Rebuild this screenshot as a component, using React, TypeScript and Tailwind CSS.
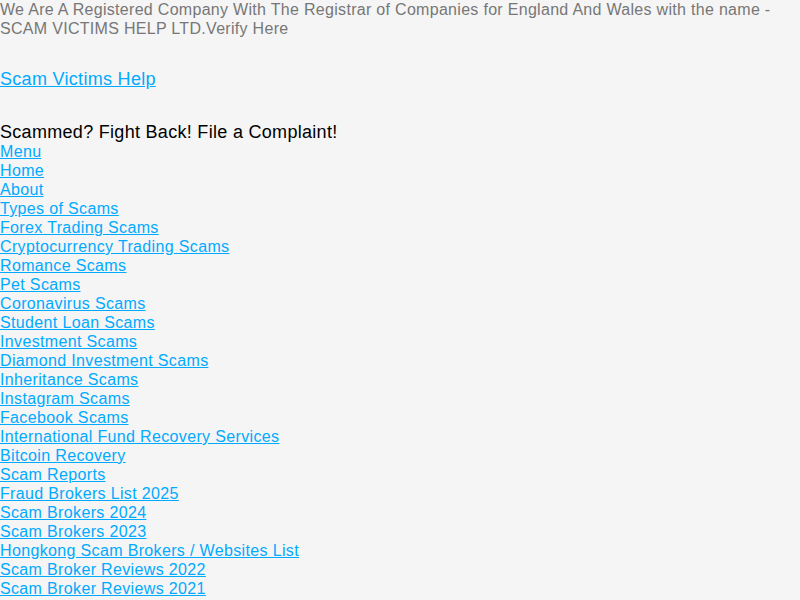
export default function App() {
  const links = [
    "Menu",
    "Home",
    "About",
    "Types of Scams",
    "Forex Trading Scams",
    "Cryptocurrency Trading Scams",
    "Romance Scams",
    "Pet Scams",
    "Coronavirus Scams",
    "Student Loan Scams",
    "Investment Scams",
    "Diamond Investment Scams",
    "Inheritance Scams",
    "Instagram Scams",
    "Facebook Scams",
    "International Fund Recovery Services",
    "Bitcoin Recovery",
    "Scam Reports",
    "Fraud Brokers List 2025",
    "Scam Brokers 2024",
    "Scam Brokers 2023",
    "Hongkong Scam Brokers / Websites List",
    "Scam Broker Reviews 2022",
    "Scam Broker Reviews 2021",
  ];
  return (
    <div
      className="min-h-[600px] w-full overflow-hidden bg-[#f5f5f5]"
      style={{ fontFamily: '"Liberation Sans", Arial, sans-serif' }}
    >
      <div className="text-[16px] leading-[19px] tracking-[0.3px] text-[#777777]">
        We Are A Registered Company With The Registrar of Companies for England And Wales with the name - SCAM VICTIMS HELP LTD.Verify Here
      </div>
      <div className="mt-[30px]">
        <a href="#" className="text-[18px] leading-[21px] tracking-[0.3px] text-[#00aaff] underline">
          Scam Victims Help
        </a>
      </div>
      <div className="mt-[30px] text-[18px] leading-[20px] tracking-[0.3px] text-black">
        Scammed? Fight Back! File a Complaint!
      </div>
      <div className="flex flex-col items-start">
        {links.map((l) => (
          <a key={l} href="#" className="text-[16px] leading-[19px] tracking-[0.35px] text-[#00aaff] underline">
            {l}
          </a>
        ))}
      </div>
    </div>
  );
}
